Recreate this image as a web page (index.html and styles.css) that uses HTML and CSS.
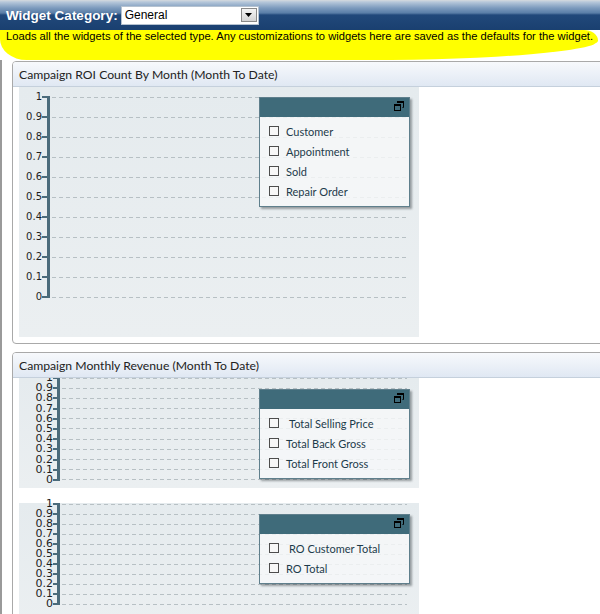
FILE: index.html
```html
<!DOCTYPE html>
<html>
<head>
<meta charset="utf-8">
<title>Widgets</title>
<link rel="stylesheet" href="styles.css">
</head>
<body>
<div class="topbar">
  <span class="cat-label">Widget Category:</span>
  <div class="select">
    <span class="sel-text">General</span>
    <span class="sel-btn"><svg width="7" height="4" viewBox="0 0 7 4"><path d="M0 0h7L3.5 4z" fill="#000"/></svg></span>
  </div>
</div>
<div class="note">Loads all the widgets of the selected type. Any customizations to widgets here are saved as the defaults for the widget.</div>
<div class="content">
  <section class="panel">
    <header class="panel-head">Campaign ROI Count By Month (Month To Date)</header>
    <div class="panel-body">
      <div class="chart chart-lg">
        <div class="axis">
          <div class="row"><span class="lbl">1</span><span class="tick"></span><span class="grid"></span></div>
          <div class="row"><span class="lbl">0.9</span><span class="tick"></span><span class="grid"></span></div>
          <div class="row"><span class="lbl">0.8</span><span class="tick"></span><span class="grid"></span></div>
          <div class="row"><span class="lbl">0.7</span><span class="tick"></span><span class="grid"></span></div>
          <div class="row"><span class="lbl">0.6</span><span class="tick"></span><span class="grid"></span></div>
          <div class="row"><span class="lbl">0.5</span><span class="tick"></span><span class="grid"></span></div>
          <div class="row"><span class="lbl">0.4</span><span class="tick"></span><span class="grid"></span></div>
          <div class="row"><span class="lbl">0.3</span><span class="tick"></span><span class="grid"></span></div>
          <div class="row"><span class="lbl">0.2</span><span class="tick"></span><span class="grid"></span></div>
          <div class="row"><span class="lbl">0.1</span><span class="tick"></span><span class="grid"></span></div>
          <div class="row"><span class="lbl">0</span><span class="tick"></span><span class="grid"></span></div>
        </div>
        <div class="legend">
          <div class="legend-head"><svg class="restore" width="10" height="10" viewBox="0 0 10 10"><path d="M3.5 1.5V.5h6v6h-1" fill="none" stroke="#000"/><rect x="3" y="0" width="7" height="2" fill="#000"/><rect x="0.5" y="3.5" width="6" height="6" fill="#3f6b7a" stroke="#000"/><rect x="0" y="3" width="7" height="2" fill="#000"/></svg></div>
          <ul class="legend-body">
            <li><span class="cb"></span>Customer</li>
            <li><span class="cb"></span>Appointment</li>
            <li><span class="cb"></span>Sold</li>
            <li><span class="cb"></span>Repair Order</li>
          </ul>
        </div>
      </div>
    </div>
  </section>
  <section class="panel">
    <header class="panel-head">Campaign Monthly Revenue (Month To Date)</header>
    <div class="panel-body">
      <div class="chart chart-md">
        <div class="axis">
          <div class="row"><span class="lbl">1</span><span class="tick"></span><span class="grid"></span></div>
          <div class="row"><span class="lbl">0.9</span><span class="tick"></span><span class="grid"></span></div>
          <div class="row"><span class="lbl">0.8</span><span class="tick"></span><span class="grid"></span></div>
          <div class="row"><span class="lbl">0.7</span><span class="tick"></span><span class="grid"></span></div>
          <div class="row"><span class="lbl">0.6</span><span class="tick"></span><span class="grid"></span></div>
          <div class="row"><span class="lbl">0.5</span><span class="tick"></span><span class="grid"></span></div>
          <div class="row"><span class="lbl">0.4</span><span class="tick"></span><span class="grid"></span></div>
          <div class="row"><span class="lbl">0.3</span><span class="tick"></span><span class="grid"></span></div>
          <div class="row"><span class="lbl">0.2</span><span class="tick"></span><span class="grid"></span></div>
          <div class="row"><span class="lbl">0.1</span><span class="tick"></span><span class="grid"></span></div>
          <div class="row"><span class="lbl">0</span><span class="tick"></span><span class="grid"></span></div>
        </div>
        <div class="legend">
          <div class="legend-head"><svg class="restore" width="10" height="10" viewBox="0 0 10 10"><path d="M3.5 1.5V.5h6v6h-1" fill="none" stroke="#000"/><rect x="3" y="0" width="7" height="2" fill="#000"/><rect x="0.5" y="3.5" width="6" height="6" fill="#3f6b7a" stroke="#000"/><rect x="0" y="3" width="7" height="2" fill="#000"/></svg></div>
          <ul class="legend-body">
            <li><span class="cb"></span><span class="lead">Total Selling Price</span></li>
            <li><span class="cb"></span>Total Back Gross</li>
            <li><span class="cb"></span>Total Front Gross</li>
          </ul>
        </div>
      </div>
      <div class="chart chart-sm">
        <div class="axis">
          <div class="row"><span class="lbl">1</span><span class="tick"></span><span class="grid"></span></div>
          <div class="row"><span class="lbl">0.9</span><span class="tick"></span><span class="grid"></span></div>
          <div class="row"><span class="lbl">0.8</span><span class="tick"></span><span class="grid"></span></div>
          <div class="row"><span class="lbl">0.7</span><span class="tick"></span><span class="grid"></span></div>
          <div class="row"><span class="lbl">0.6</span><span class="tick"></span><span class="grid"></span></div>
          <div class="row"><span class="lbl">0.5</span><span class="tick"></span><span class="grid"></span></div>
          <div class="row"><span class="lbl">0.4</span><span class="tick"></span><span class="grid"></span></div>
          <div class="row"><span class="lbl">0.3</span><span class="tick"></span><span class="grid"></span></div>
          <div class="row"><span class="lbl">0.2</span><span class="tick"></span><span class="grid"></span></div>
          <div class="row"><span class="lbl">0.1</span><span class="tick"></span><span class="grid"></span></div>
          <div class="row"><span class="lbl">0</span><span class="tick"></span><span class="grid"></span></div>
        </div>
        <div class="legend">
          <div class="legend-head"><svg class="restore" width="10" height="10" viewBox="0 0 10 10"><path d="M3.5 1.5V.5h6v6h-1" fill="none" stroke="#000"/><rect x="3" y="0" width="7" height="2" fill="#000"/><rect x="0.5" y="3.5" width="6" height="6" fill="#3f6b7a" stroke="#000"/><rect x="0" y="3" width="7" height="2" fill="#000"/></svg></div>
          <ul class="legend-body">
            <li><span class="cb"></span><span class="lead">RO Customer Total</span></li>
            <li><span class="cb"></span>RO Total</li>
          </ul>
        </div>
      </div>
    </div>
  </section>
</div>
</body>
</html>
```

FILE: styles.css
```css
html, body {
  margin: 0;
  padding: 0;
  overflow: hidden;
  background: #fff;
}
body {
  width: 600px;
  height: 614px;
  font-family: "Liberation Sans", Arial, sans-serif;
}

/* top bar */
.topbar {
  height: 30px;
  box-sizing: border-box;
  display: flex;
  align-items: center;
  gap: 3px;
  padding-left: 6px;
  background: linear-gradient(to bottom, #d6dade 0, #b6c7da 2px, #7c9abd 8px, #5a7ea7 13px, #21487a 15px, #1a4070 100%);
}
.cat-label {
  color: #fff;
  font: bold 13.5px "Liberation Sans", Arial, sans-serif;
  white-space: nowrap;
}
.select {
  width: 138px;
  height: 19px;
  box-sizing: border-box;
  background: #fff;
  border: 1px solid #b5c2d0;
  display: flex;
  align-items: center;
  justify-content: space-between;
  padding-left: 3px;
  font: 12px "Liberation Sans", Arial, sans-serif;
  color: #000;
}
.sel-btn {
  width: 16px;
  height: 14px;
  box-sizing: border-box;
  margin-right: 1px;
  background: linear-gradient(#f4f4f4, #d4d4d4);
  border: 1px solid #8a8a8a;
  display: flex;
  align-items: center;
  justify-content: center;
}

/* highlighted note */
.note {
  width: 598px;
  height: 30px;
  box-sizing: border-box;
  padding-left: 6px;
  line-height: 30px;
  background: #ffff00;
  color: #000;
  font: 11.2px "Liberation Sans", Arial, sans-serif;
  white-space: nowrap;
  border-radius: 0 16px 260px 30px / 0 12px 22px 24px;
}

/* content */
.content {
  border-left: 2px solid #9a9a9a;
  padding: 1px 0 0 10px;
}
.panel {
  width: 640px;
  border: 1px solid #a9a9a9;
  border-radius: 4px;
  overflow: hidden;
  background: #fff;
}
.panel + .panel {
  margin-top: 8px;
}
.panel-head {
  height: 25px;
  box-sizing: border-box;
  padding: 5px 0 0 6px;
  line-height: 19px;
  border-bottom: 1px solid #c5d0dc;
  background: linear-gradient(#f7f9fc, #e0e8f3);
  font: 12.2px "Lato", "Open Sans", sans-serif;
  color: #222;
  white-space: nowrap;
}
.panel-body {
  padding: 0 0 6px 6px;
  display: flex;
  flex-direction: column;
  gap: 15px;
}

/* charts */
.chart {
  width: 400px;
  position: relative;
  background: linear-gradient(#e5ebee, #ebeff1);
}
.chart-lg { height: 250px; }
.chart-md { height: 110px; overflow: hidden; }
.chart-sm { height: 120px; }

.axis { position: relative; }
.axis::before {
  content: "";
  position: absolute;
  width: 3px;
  background: #4b6b7b;
}
.row {
  display: flex;
  align-items: center;
}
.lbl {
  text-align: right;
  font-family: "DejaVu Sans", Verdana, sans-serif;
  color: #1e1e1e;
  white-space: nowrap;
}
.tick {
  height: 2px;
  background: #4b6b7b;
}
.grid {
  height: 1px;
  background: repeating-linear-gradient(to right, #b7c0c4 0 4px, transparent 4px 7px);
}

.chart-lg .axis::before { left: 28px; top: 9px; height: 202px; }
.chart-lg .row { height: 20px; }
.chart-lg .lbl { width: 23px; font-size: 10px; line-height: 12px; }
.chart-lg .tick { width: 5px; margin-right: 5px; }
.chart-lg .grid { width: 355px; }

.chart-md .axis { margin-top: -5.1px; }
.chart-md .axis::before { left: 38px; top: 4px; height: 104px; }
.chart-md .row { height: 10.2px; }

.chart-sm .axis { margin-top: -4px; }
.chart-sm .axis::before { left: 38px; top: 4px; height: 102px; }
.chart-sm .row { height: 10px; }

.chart-md .lbl, .chart-sm .lbl { width: 34px; font-size: 11px; line-height: 10px; }
.chart-md .tick, .chart-sm .tick { width: 4px; margin-right: 5px; }
.chart-md .grid, .chart-sm .grid { width: 345px; }

/* legend */
.legend {
  position: absolute;
  left: 240px;
  top: 11px;
  width: 151px;
  box-sizing: border-box;
  border: 1px solid #5f7f8c;
  box-shadow: 2px 2px 2px rgba(50, 60, 65, 0.45);
}
.chart-lg .legend { top: 10px; }
.legend-head {
  height: 19px;
  box-sizing: border-box;
  background: #3f6b7a;
  display: flex;
  justify-content: flex-end;
  align-items: flex-start;
  padding: 3px 5px 0 0;
}
.restore { display: block; }
.legend-body {
  list-style: none;
  margin: 0;
  padding: 4px 0 5px 9px;
  background: rgba(246, 248, 249, 0.82);
}
.legend-body li {
  height: 20px;
  display: flex;
  align-items: center;
  font: 11px "Lato", "Open Sans", sans-serif;
  color: #1d3b4b;
  white-space: nowrap;
}
.cb {
  width: 10px;
  height: 10px;
  box-sizing: border-box;
  border: 1px solid #4d4d4d;
  background: #f7f7f7;
  margin-right: 7px;
  flex: none;
}
.lead { padding-left: 3px; }
```
